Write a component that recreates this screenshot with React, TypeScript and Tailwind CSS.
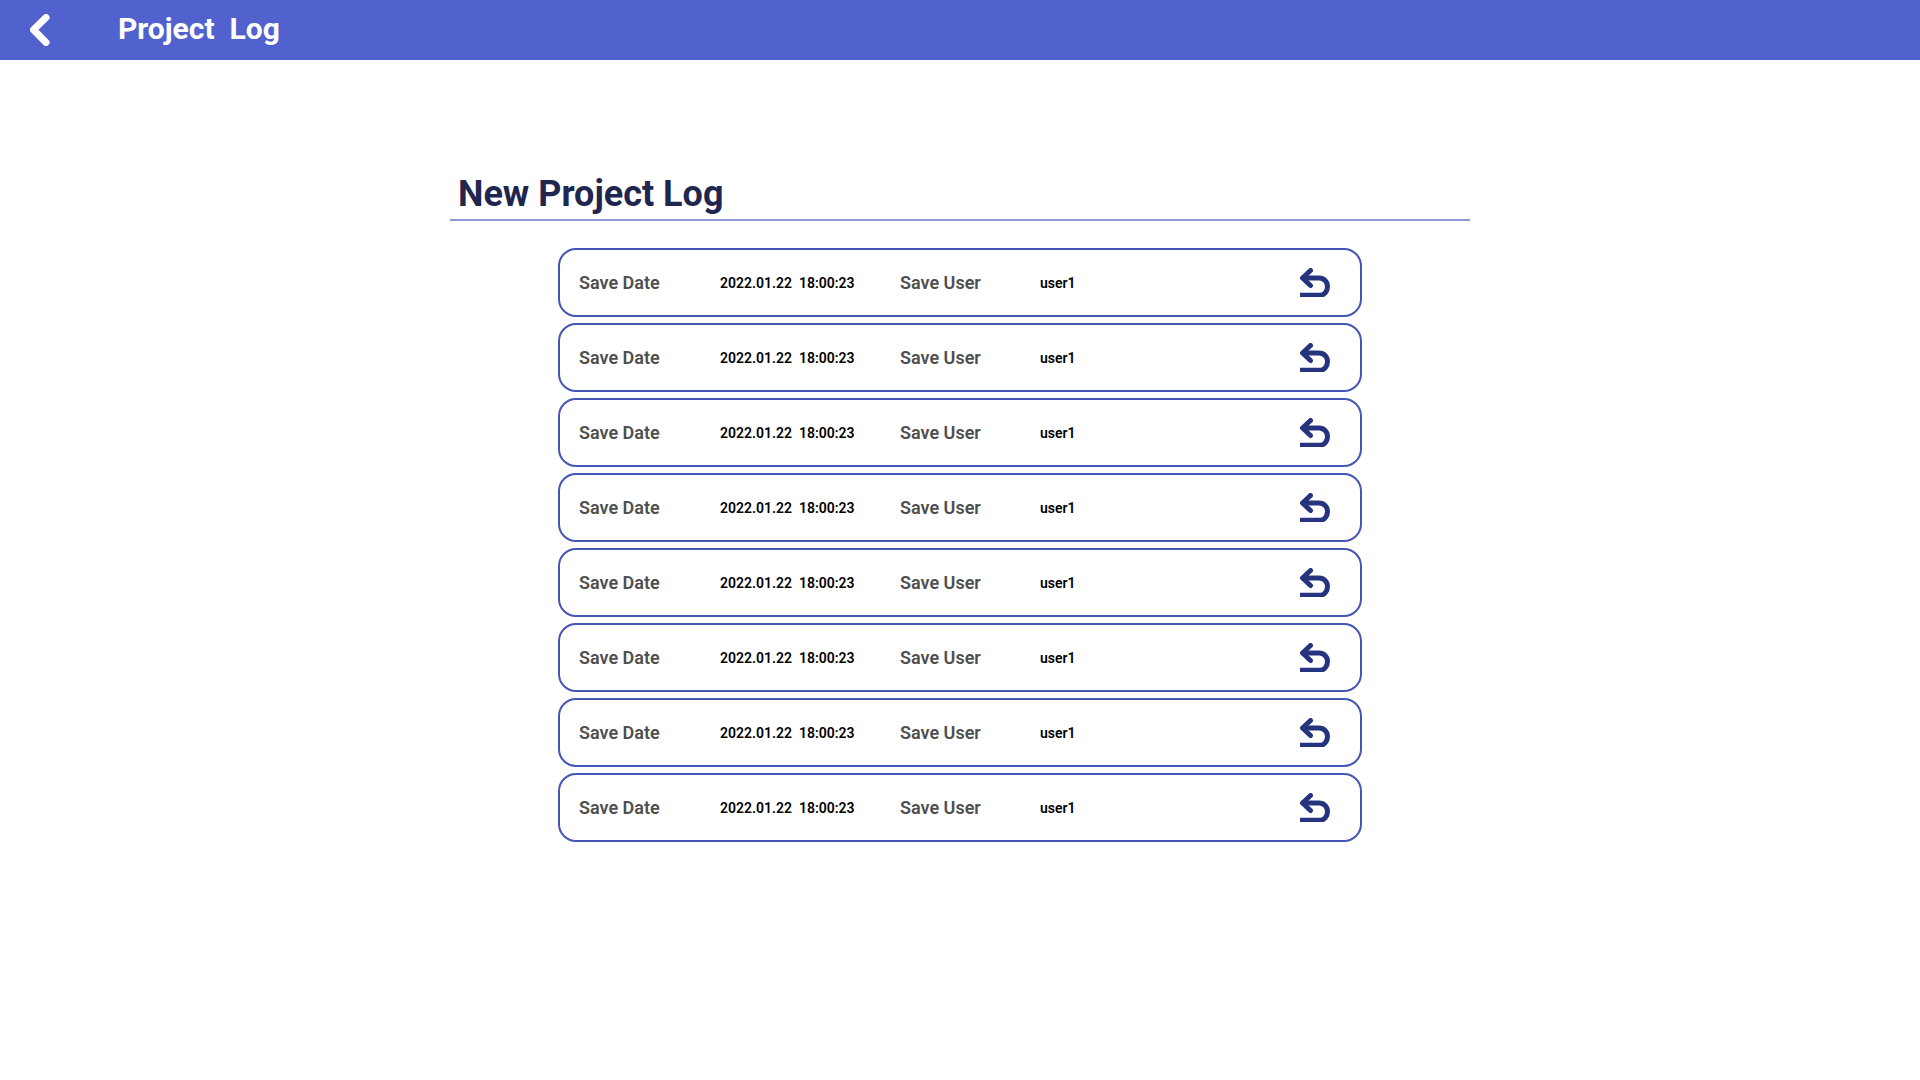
const logs = Array.from({ length: 8 }, (_, i) => ({
  id: i,
  date: '2022.01.22\u00a0 18:00:23',
  user: 'user1',
}));

function BackIcon() {
  return (
    <svg width="20" height="32" viewBox="0 0 20 32" fill="none" aria-hidden="true">
      <path d="M16 3.500L3.500 15.800L16 28.500" stroke="white" strokeWidth="7" strokeLinecap="round" strokeLinejoin="round" />
    </svg>
  );
}

function RestoreIcon() {
  return (
    <svg width="30" height="29" viewBox="0 0 30 29" fill="none" stroke="#26337f" strokeWidth="5" aria-hidden="true">
      <path d="M10.500 2.500L2.500 10L10.500 17.500" strokeLinecap="round" strokeLinejoin="round" />
      <path d="M3 10H19C24 10 27.500 13.800 27.500 18.500C27.500 22.800 24.500 27.300 20 27.300H0" />
    </svg>
  );
}

function LogRow({ date, user }: { date: string; user: string }) {
  return (
    <li className="flex h-[69px] items-center rounded-[18px] border-2 border-[#4656b4] pr-[30px] pl-[19px]">
      <dl className="flex flex-1 items-center">
        <dt className="w-[141px] text-lg font-semibold text-[#4f4f4f]">Save Date</dt>
        <dd className="w-[180px] text-sm font-semibold text-black">{date}</dd>
        <dt className="w-[140px] text-lg font-semibold text-[#4f4f4f]">Save User</dt>
        <dd className="text-sm font-semibold text-black">{user}</dd>
      </dl>
      <button type="button" aria-label="Restore this version">
        <RestoreIcon />
      </button>
    </li>
  );
}

export default function App() {
  return (
    <div className="min-h-screen bg-white font-[Roboto,sans-serif]">
      <header className="flex h-[60px] items-center bg-[#5162ce] pl-[30px]">
        <button type="button" aria-label="Back" className="w-[88px]">
          <BackIcon />
        </button>
        <h1 className="pb-0.5 text-[30px] leading-9 font-bold text-white">Project&nbsp; Log</h1>
      </header>
      <main className="mx-auto max-w-[1020px] pt-[112px]">
        <h2 className="border-b-2 border-[#9299d6] px-2 pb-0.5 text-4xl leading-[45px] font-bold text-[#1f2650]">
          New Project Log
        </h2>
        <ul className="mx-auto mt-[27px] flex max-w-[804px] flex-col gap-1.5">
          {logs.map((log) => (
            <LogRow key={log.id} date={log.date} user={log.user} />
          ))}
        </ul>
      </main>
    </div>
  );
}
